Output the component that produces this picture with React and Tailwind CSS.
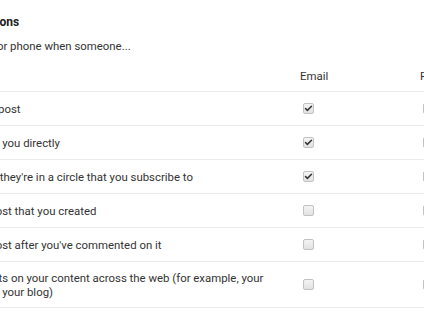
import { Check } from 'lucide-react';

const rows = [
  { label: 'Mentions you in a post', email: true },
  { label: 'Shares a post with you directly', email: true },
  { label: "Shares a post and they're in a circle that you subscribe to", email: true },
  { label: 'Comments on a post that you created', email: false },
  { label: "Comments on a post after you've commented on it", email: false },
  {
    label: 'Appends comments on your content across the web (for example, your YouTube videos or your blog)',
    email: false,
    tall: true,
  },
];

function Box({ checked }) {
  return (
    <span className="flex h-[11px] w-[11px] items-center justify-center rounded-[2px] border border-[#c2c2c2] bg-gradient-to-b from-[#f4f4f4] to-[#e2e2e2]">
      {checked && <Check size={9} strokeWidth={4} className="text-[#333]" />}
    </span>
  );
}

export default function App() {
  return (
    <div className="h-[318px] w-[424px] overflow-hidden bg-white font-['Roboto',sans-serif] text-[#333]">
      <div className="ml-[-94px] w-[660px]">
        <h2 className="pt-[14px] text-[12px] font-bold leading-[16px] text-[#212121]">Receive notifications</h2>
        <p className="mt-[9px] text-[11.4px] leading-[14px]">Alert me by email or phone when someone...</p>

        <div className="mt-[16px] flex border-b border-[#ebebeb] pb-[8px] text-[11.4px] leading-[14px]">
          <div className="w-[390px]" />
          <div className="w-[120px] pl-[4px]">Email</div>
          <div className="w-[120px] pl-[4px]">Phone</div>
        </div>

        {rows.map(row => (
          <div
            key={row.label}
            className={`flex items-center border-b border-[#ebebeb] text-[11.4px] leading-[14px] ${row.tall ? 'h-[46px]' : 'h-[34px]'}`}
          >
            <div className="w-[390px] pr-[24px]">{row.label}</div>
            <div className="w-[120px] pl-[7px]">
              <Box checked={row.email} />
            </div>
            <div className="w-[120px] pl-[7px]">
              <Box checked={false} />
            </div>
          </div>
        ))}
      </div>
    </div>
  );
}
